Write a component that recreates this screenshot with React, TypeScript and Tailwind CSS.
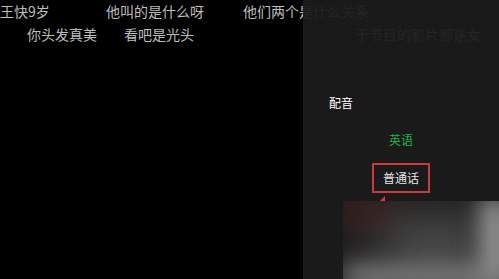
import React from 'react'

// danmaku rows that scroll over the video; the ones under the panel show through faintly
const Danmaku: React.FC = () => (
  <div className="flex flex-col gap-[3px] pt-px text-[14px] leading-5 text-[#bdbdbd] whitespace-nowrap">
    <div className="flex">
      <span className="w-[106px] shrink-0">王快9岁</span>
      <span className="w-[137px] shrink-0">他叫的是什么呀</span>
      <span className="shrink-0">他们两个是什么关系</span>
    </div>
    <div className="flex pl-[27px]">
      <span className="w-[97px] shrink-0">你头发真美</span>
      <span className="w-[231px] shrink-0">看吧是光头</span>
      <span className="shrink-0">于节目的影片都是女</span>
    </div>
  </div>
)

const BlurredThumb: React.FC = () => (
  <div className="absolute left-[40px] top-[201px] right-0 bottom-0 overflow-hidden bg-[#1e1e1e]">
    <div className="absolute left-[-10px] top-[-12px] w-[70px] h-[40px] rounded-full bg-[#3e1e1e] blur-lg opacity-80" />
    <div className="absolute left-[35px] top-[22px] w-[110px] h-[46px] rounded-full bg-[#585858] blur-xl" />
    <div className="absolute right-[-10px] top-[-4px] w-[28px] h-[90px] bg-[#a0a0a0] blur-md" />
    <div className="absolute left-0 right-0 bottom-[-10px] h-[24px] bg-[#858585] blur-md" />
  </div>
)

export default function App() {
  return (
    <div className="relative w-[499px] h-[279px] overflow-hidden bg-black font-['Noto_Sans_CJK_SC','Noto_Sans',sans-serif]">
      <Danmaku />

      {/* dubbing panel */}
      <div className="absolute top-0 right-0 bottom-0 w-[196px] bg-[#1b1b1b]/95">
        <div className="flex flex-col pt-[95px]">
          <div className="pl-[26px] text-[12px] leading-4 text-white">配音</div>
          <div className="mt-[14px] flex flex-col items-center gap-[8px] text-[12px]">
            <div className="flex h-[30px] w-[58px] items-center justify-center text-[#22b24a]">英语</div>
            <div className="relative flex h-[30px] w-[58px] items-center justify-center border-2 border-[#c93a3c] text-[#e6e6e6]">
              普通话
              <svg className="absolute left-[5px] top-[31px]" width="6" height="6" viewBox="0 0 6 6">
                <path d="M6 0 L6 6 L0 6 Z" fill="#e0333a" />
              </svg>
            </div>
          </div>
        </div>
        <BlurredThumb />
      </div>
    </div>
  )
}
